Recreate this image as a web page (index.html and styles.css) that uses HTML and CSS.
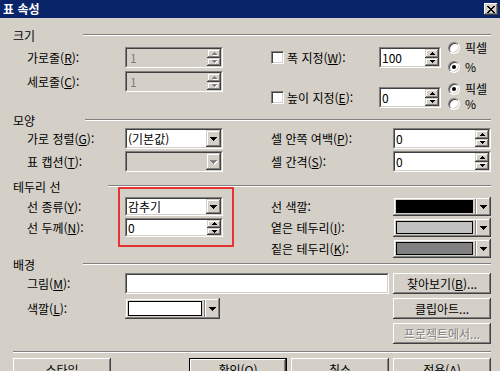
FILE: index.html
```html
<!DOCTYPE html>
<html lang="ko">
<head>
<meta charset="utf-8">
<title>표 속성</title>
<link rel="stylesheet" href="styles.css">
</head>
<body>
<div class="dialog">
  <div class="titlebar">
    <span class="title">표 속성</span>
    <span class="closebtn"><svg width="8" height="7" viewBox="0 0 8 7"><path d="M0 0h2v1H0zM6 0h2v1H6zM1 1h2v1H1zM5 1h2v1H5zM2 2h4v1H2zM3 3h2v1H3zM2 4h4v1H2zM1 5h2v1H1zM5 5h2v1H5zM0 6h2v1H0zM6 6h2v1H6z"/></svg></span>
  </div>

  <div class="content">
    <!-- 크기 -->
    <section class="group g-size">
      <div class="ghead"><span class="gt w70">크기</span><i class="groove"></i></div>
      <div class="size-body">
        <div class="size-left">
          <span class="lbl">가로줄(<u>R</u>):</span>
          <div class="edit disabled"><div class="in"><span class="val">1</span><span class="spin"><span class="sb"><svg width="5" height="3"><path d="M2 0h1v1H2zM1 1h3v1H1zM0 2h5v1H0z"/></svg></span><span class="sb"><svg width="5" height="3"><path d="M0 0h5v1H0zM1 1h3v1H1zM2 2h1v1H2z"/></svg></span></span></div></div>
          <span class="lbl">세로줄(<u>C</u>):</span>
          <div class="edit disabled"><div class="in"><span class="val">1</span><span class="spin"><span class="sb"><svg width="5" height="3"><path d="M2 0h1v1H2zM1 1h3v1H1zM0 2h5v1H0z"/></svg></span><span class="sb"><svg width="5" height="3"><path d="M0 0h5v1H0zM1 1h3v1H1zM2 2h1v1H2z"/></svg></span></span></div></div>
        </div>
        <div class="size-right">
          <div class="dim dim-w">
            <div class="field">
              <span class="check"></span><span class="clbl">폭 지정(<u>W</u>):</span>
              <div class="edit w62"><div class="in"><span class="val">100</span><span class="spin"><span class="sb"><svg width="5" height="3"><path d="M2 0h1v1H2zM1 1h3v1H1zM0 2h5v1H0z"/></svg></span><span class="sb"><svg width="5" height="3"><path d="M0 0h5v1H0zM1 1h3v1H1zM2 2h1v1H2z"/></svg></span></span></div></div>
            </div>
            <div class="radios">
              <div class="radio"><span class="rb"></span><span>픽셀</span></div>
              <div class="radio"><span class="rb on"></span><span>%</span></div>
            </div>
          </div>
          <div class="dim dim-h">
            <div class="field">
              <span class="check"></span><span class="clbl">높이 지정(<u>E</u>):</span>
              <div class="edit w62"><div class="in"><span class="val">0</span><span class="spin"><span class="sb"><svg width="5" height="3"><path d="M2 0h1v1H2zM1 1h3v1H1zM0 2h5v1H0z"/></svg></span><span class="sb"><svg width="5" height="3"><path d="M0 0h5v1H0zM1 1h3v1H1zM2 2h1v1H2z"/></svg></span></span></div></div>
            </div>
            <div class="radios">
              <div class="radio"><span class="rb on"></span><span>픽셀</span></div>
              <div class="radio"><span class="rb"></span><span>%</span></div>
            </div>
          </div>
        </div>
      </div>
    </section>

    <!-- 모양 -->
    <section class="group g-shape">
      <div class="ghead"><span class="gt w72">모양</span><i class="groove"></i></div>
      <div class="grid5">
        <span class="lbl c1 r1">가로 정렬(<u>G</u>):</span>
        <div class="edit c2 r1"><div class="in"><span class="val">(기본값)</span><span class="drop"><svg width="7" height="4"><path d="M0 0h7v1H0zM1 1h5v1H1zM2 2h3v1H2zM3 3h1v1H3z"/></svg></span></div></div>
        <span class="lbl c1 r2">표 캡션(<u>T</u>):</span>
        <div class="edit disabled c2 r2"><div class="in"><span class="val"></span><span class="drop"><svg width="7" height="4"><path d="M0 0h7v1H0zM1 1h5v1H1zM2 2h3v1H2zM3 3h1v1H3z"/></svg></span></div></div>
        <span class="lbl c4 r1">셀 안쪽 여백(<u>P</u>):</span>
        <div class="edit c5 r1"><div class="in"><span class="val">0</span><span class="spin"><span class="sb"><svg width="5" height="3"><path d="M2 0h1v1H2zM1 1h3v1H1zM0 2h5v1H0z"/></svg></span><span class="sb"><svg width="5" height="3"><path d="M0 0h5v1H0zM1 1h3v1H1zM2 2h1v1H2z"/></svg></span></span></div></div>
        <span class="lbl c4 r2">셀 간격(<u>S</u>):</span>
        <div class="edit c5 r2"><div class="in"><span class="val">0</span><span class="spin"><span class="sb"><svg width="5" height="3"><path d="M2 0h1v1H2zM1 1h3v1H1zM0 2h5v1H0z"/></svg></span><span class="sb"><svg width="5" height="3"><path d="M0 0h5v1H0zM1 1h3v1H1zM2 2h1v1H2z"/></svg></span></span></div></div>
      </div>
    </section>

    <!-- 테두리 선 -->
    <section class="group g-border">
      <div class="ghead"><span class="gt w95">테두리 선</span><i class="groove"></i></div>
      <div class="grid5">
        <span class="lbl c1 r1">선 종류(<u>Y</u>):</span>
        <div class="edit c2 r1"><div class="in"><span class="val">감추기</span><span class="drop"><svg width="7" height="4"><path d="M0 0h7v1H0zM1 1h5v1H1zM2 2h3v1H2zM3 3h1v1H3z"/></svg></span></div></div>
        <span class="lbl c1 r2">선 두께(<u>N</u>):</span>
        <div class="edit c2 r2"><div class="in"><span class="val">0</span><span class="spin"><span class="sb"><svg width="5" height="3"><path d="M2 0h1v1H2zM1 1h3v1H1zM0 2h5v1H0z"/></svg></span><span class="sb"><svg width="5" height="3"><path d="M0 0h5v1H0zM1 1h3v1H1zM2 2h1v1H2z"/></svg></span></span></div></div>

        <span class="lbl c4 r1">선 색깔:</span>
        <div class="cbtn c5 r1"><span class="sw sw-black"></span><span class="cdiv"></span><span class="carrow"><svg width="7" height="4"><path d="M0 0h7v1H0zM1 1h5v1H1zM2 2h3v1H2zM3 3h1v1H3z"/></svg></span></div>
        <span class="lbl c4 r2">옅은 테두리(<u>I</u>):</span>
        <div class="cbtn c5 r2"><span class="sw sw-light"></span><span class="cdiv"></span><span class="carrow"><svg width="7" height="4"><path d="M0 0h7v1H0zM1 1h5v1H1zM2 2h3v1H2zM3 3h1v1H3z"/></svg></span></div>
        <span class="lbl c4 r3">짙은 테두리(<u>K</u>):</span>
        <div class="cbtn c5 r3"><span class="sw sw-dark"></span><span class="cdiv"></span><span class="carrow"><svg width="7" height="4"><path d="M0 0h7v1H0zM1 1h5v1H1zM2 2h3v1H2zM3 3h1v1H3z"/></svg></span></div>
      </div>
      <div class="mark"></div>
    </section>

    <!-- 배경 -->
    <section class="group g-bg">
      <div class="ghead"><span class="gt w70">배경</span><i class="groove"></i></div>
      <div class="gridbg">
        <span class="lbl">그림(<u>M</u>):</span>
        <div class="edit"><div class="in"><span class="val"></span></div></div>
        <span></span>
        <div class="btn">찾아보기(<u>B</u>)...</div>

        <span class="lbl">색깔(<u>L</u>):</span>
        <div class="cbtn small"><span class="sw sw-white"></span><span class="cdiv"></span><span class="carrow"><svg width="7" height="4"><path d="M0 0h7v1H0zM1 1h5v1H1zM2 2h3v1H2zM3 3h1v1H3z"/></svg></span></div>
        <span></span>
        <div class="btn">클립아트...</div>

        <span></span><span></span><span></span>
        <div class="btn off">프로젝트에서...</div>
      </div>
    </section>

    <div class="sep"></div>

    <div class="btnrow">
      <div class="btn">스타일</div>
      <span></span>
      <div class="btn default">확인(<u>O</u>)</div>
      <div class="btn">취소</div>
      <div class="btn">적용(<u>A</u>)</div>
    </div>
  </div>
</div>
</body>
</html>
```

FILE: styles.css
```css
* { box-sizing: border-box; }
html, body { margin: 0; padding: 0; }
body {
  width: 500px;
  height: 371px;
  overflow: hidden;
  background: #d4d0c8;
  font-family: "Noto Sans CJK KR", "Noto Sans", sans-serif;
  font-size: 12px;
  line-height: 14px;
  color: #000;
}
u { text-decoration: underline; text-underline-offset: 1px; }
svg { display: block; }
svg path { fill: #000; }

/* title bar */
.titlebar {
  height: 18px;
  background: #0a246a;
  color: #fff;
  display: flex;
  align-items: center;
  justify-content: space-between;
  padding: 0 2px 0 3px;
}
.title { font-weight: bold; line-height: 18px; }
.closebtn {
  width: 14px;
  height: 12px;
  background: #d4d0c8;
  box-shadow: inset -1px -1px #404040, inset 1px 1px #fff, inset -2px -2px #808080;
  display: flex;
  align-items: center;
  justify-content: center;
}

/* content */
.content { padding: 0 9px 0 13px; }
.group { position: relative; }
.ghead { display: flex; height: 12px; line-height: 12px; }
.gt { flex: none; white-space: nowrap; }
.w70 { width: 70px; }
.w72 { width: 72px; }
.w95 { width: 95px; }
.groove {
  flex: 1;
  height: 2px;
  margin-top: 4px;
  border-top: 1px solid #808080;
  border-bottom: 1px solid #fff;
}

.g-size { margin-top: 12px; }
.g-shape { margin-top: 5px; }
.g-border { margin-top: 9px; }
.g-bg { margin-top: 1px; }

.lbl { display: flex; align-items: center; white-space: nowrap; }

/* sunken edit */
.edit {
  height: 100%;
  border: 1px solid;
  border-color: #808080 #fff #fff #808080;
}
.edit > .in {
  height: 100%;
  border: 1px solid;
  border-color: #404040 #d4d0c8 #d4d0c8 #404040;
  background: #fff;
  display: flex;
  align-items: stretch;
}
.val {
  flex: 1;
  padding-left: 1px;
  display: flex;
  align-items: center;
  white-space: nowrap;
  overflow: hidden;
}
.edit.disabled > .in { background: #d4d0c8; }
.edit.disabled .val { color: #808080; padding-left: 3px; }
.edit.disabled svg path { fill: #808080; }
.edit.disabled svg { filter: drop-shadow(1px 1px 0 #fff); }

/* raised bevel for small buttons */
.sb, .drop, .cbtn {
  background: #d4d0c8;
  box-shadow: inset -1px -1px #404040, inset 1px 1px #d4d0c8, inset -2px -2px #808080, inset 2px 2px #fff;
}
.spin { width: 14px; display: flex; flex-direction: column; }
.sb { flex: 1; display: flex; align-items: center; justify-content: center; }
.drop { width: 15px; display: flex; align-items: center; justify-content: center; }

/* size section */
.size-body { display: flex; }
.size-left {
  width: 258px;
  flex: none;
  padding: 5px 0 0 14px;
  display: grid;
  grid-template-columns: 98px 98px;
  grid-auto-rows: 21px;
  row-gap: 3px;
  align-content: start;
}
.size-right { flex: 1; }
.dim { display: flex; align-items: flex-start; }
.dim .field { display: flex; align-items: center; height: 21px; }
.dim-w .field { margin-top: 5px; }
.dim-h { margin-top: 10px; }
.dim-h .field { margin-top: 4px; }
.check {
  width: 13px;
  height: 13px;
  flex: none;
  background: #fff;
  border: 1px solid;
  border-color: #808080 #fff #fff #808080;
  box-shadow: inset 1px 1px #404040, inset -1px -1px #d4d0c8;
}
.clbl { width: 95px; padding-left: 3px; white-space: nowrap; flex: none; }
.w62 { width: 62px; height: 21px; flex: none; }
.radios { margin-left: 7px; display: flex; flex-direction: column; }
.radio { display: flex; align-items: center; height: 12px; line-height: 12px; white-space: nowrap; }
.radio > span + span { margin-left: 5px; }
.dim-w .radio + .radio { margin-top: 7px; }
.dim-h .radio + .radio { margin-top: 3px; }
.rb {
  width: 12px;
  height: 12px;
  flex: none;
  border-radius: 50%;
  background: #fff;
  border: 1px solid;
  border-color: #808080 #fff #fff #808080;
  box-shadow: inset 1px 1px #404040, inset -1px -1px #d4d0c8;
  display: flex;
  align-items: center;
  justify-content: center;
}
.rb.on::after {
  content: "";
  width: 4px;
  height: 4px;
  border-radius: 50%;
  background: #000;
}

/* 5-column grid */
.grid5 {
  display: grid;
  padding-left: 14px;
  grid-template-columns: 98px 98px 48px 122px 98px;
}
.g-shape .grid5 { padding-top: 1px; grid-template-rows: 21px 21px; row-gap: 2px; }
.g-border .grid5 { padding-top: 4px; grid-template-rows: 19px 19px 19px; row-gap: 2px; }
.c1 { grid-column: 1; }
.c2 { grid-column: 2; }
.c4 { grid-column: 4; }
.c5 { grid-column: 5; }
.r1 { grid-row: 1; }
.r2 { grid-row: 2; }
.r3 { grid-row: 3; }

/* color combo */
.cbtn {
  display: flex;
  align-items: stretch;
  padding: 2px;
  height: 100%;
}
.sw { flex: 1; margin: 1px; border: 1px solid #000; }
.sw-black { background: #000; }
.sw-light { background: #c0c0c0; }
.sw-dark { background: #808080; }
.sw-white { background: #fff; }
.cdiv { width: 2px; margin-left: 1px; border-left: 1px solid #808080; border-right: 1px solid #fff; }
.carrow { width: 12px; display: flex; align-items: center; justify-content: center; }
.cbtn.small { width: 95px; }

/* annotation */
.mark {
  position: absolute;
  left: 105px;
  top: 6px;
  width: 116px;
  height: 60px;
  border: 2px solid #e63232;
  pointer-events: none;
}

/* background section */
.gridbg {
  display: grid;
  padding: 2px 0 0 14px;
  grid-template-columns: 98px 264px 4px 98px;
  grid-auto-rows: 21px;
  row-gap: 4px;
}

/* push buttons */
.btn {
  background: #d4d0c8;
  box-shadow: inset -1px -1px #404040, inset 1px 1px #fff, inset -2px -2px #808080, inset 2px 2px #d4d0c8;
  display: flex;
  align-items: center;
  justify-content: center;
  white-space: nowrap;
}
.btn.off { color: #808080; text-shadow: 1px 1px 0 #fff; }
.btn.default {
  box-shadow: inset 0 0 0 1px #000, inset -2px -2px #404040, inset 2px 2px #fff, inset -3px -3px #808080;
}

.sep {
  margin-top: 7px;
  height: 2px;
  border-top: 1px solid #808080;
  border-bottom: 1px solid #fff;
}
.btnrow {
  margin-top: 5px;
  display: grid;
  grid-template-columns: 98px 1fr 98px 98px 98px;
  column-gap: 4px;
}
.btnrow .btn { height: 23px; }
```
